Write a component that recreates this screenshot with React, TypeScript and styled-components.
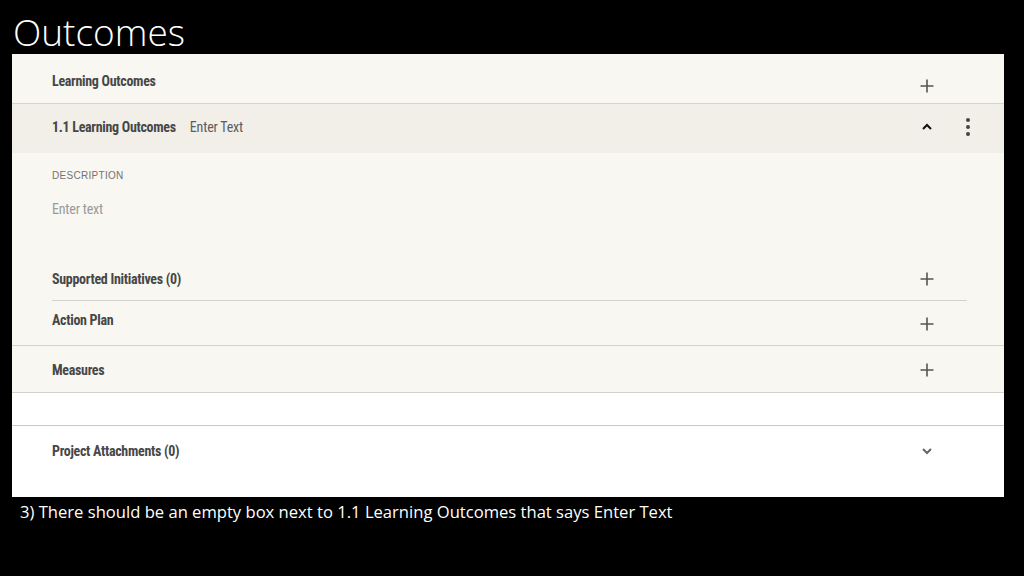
import React from "react";
import styled, { createGlobalStyle } from "styled-components";

const GlobalStyle = createGlobalStyle`
  html, body {
    margin: 0;
    padding: 0;
    background: #000;
  }
`;

const Self = styled.div`
  width: 1024px;
  height: 576px;
  background: #000;
  display: flex;
  flex-direction: column;
  overflow: hidden;
`;

const Title = styled.h1`
  margin: 0;
  height: 54px;
  padding-left: 13px;
  font-family: "Open Sans", "Liberation Sans", sans-serif;
  font-weight: 300;
  font-size: 37px;
  line-height: 1;
  color: #fff;
  display: flex;
  align-items: flex-end;
  box-sizing: border-box;
  & > span {
    transform: translateY(-4px);
  }
`;

const Panel = styled.div`
  margin-left: 12px;
  width: 992px;
  height: 443px;
  background: #f8f7f2;
  display: flex;
  flex-direction: column;
  font-family: "Liberation Sans Narrow", "Roboto Condensed", Roboto, sans-serif;
  color: #474747;
`;

const Row = styled.div<{ h: number; bg?: string; line?: string }>`
  display: flex;
  align-items: flex-start;
  height: ${p => p.h}px;
  background: ${p => p.bg || "transparent"};
  border-bottom: ${p => (p.line ? `1px solid ${p.line}` : "none")};
  padding-left: 40px;
  box-sizing: border-box;
  flex-shrink: 0;
`;

const Label = styled.span<{ top: number }>`
  margin-top: ${p => p.top}px;
  font-size: 14px;
  font-weight: 700;
  line-height: 18px;
  letter-spacing: -0.3px;
  white-space: nowrap;
`;

const Placeholder = styled.span<{ top: number }>`
  margin-top: ${p => p.top}px;
  margin-left: 14px;
  font-size: 14px;
  line-height: 18px;
  letter-spacing: -0.2px;
  color: #5d5d5d;
`;

const Icons = styled.div<{ top: number; right?: number }>`
  margin-left: auto;
  margin-top: ${p => p.top}px;
  margin-right: ${p => p.right ?? 67}px;
  display: flex;
  align-items: center;
  gap: 21px;
`;

const IconBox = styled.span`
  width: 20px;
  height: 20px;
  display: flex;
  align-items: center;
  justify-content: center;
`;

const Description = styled.div`
  height: 102px;
  padding-left: 40px;
  display: flex;
  flex-direction: column;
  box-sizing: border-box;
  flex-shrink: 0;
`;

const Caps = styled.div`
  margin-top: 17px;
  font-family: "Liberation Sans", Roboto, sans-serif;
  font-size: 10px;
  line-height: 12px;
  letter-spacing: 0.3px;
  color: #727272;
`;

const EnterText = styled.div`
  margin-top: 18px;
  font-size: 14px;
  line-height: 18px;
  letter-spacing: -0.2px;
  color: #9a9a9a;
`;

const Inset = styled.div`
  margin: 0 37px 0 40px;
  height: 46px;
  border-bottom: 1px solid #d3d1cb;
  display: flex;
  align-items: flex-start;
  box-sizing: border-box;
  flex-shrink: 0;
`;

const Spacer = styled.div`
  height: 32px;
  background: #fff;
  border-bottom: 1px solid #c8c8c8;
  flex-shrink: 0;
`;

const WhiteArea = styled.div`
  flex: 1;
  background: #fff;
  display: flex;
  align-items: flex-start;
  padding-left: 40px;
`;

const Caption = styled.p`
  margin: 5px 0 0 20px;
  font-family: "Open Sans", "Liberation Sans", sans-serif;
  font-size: 16.6px;
  line-height: 20px;
  color: #fff;
`;

const Plus = () => (
  <IconBox>
    <svg width="16" height="16" viewBox="0 0 16 16">
      <path d="M8 1.5v13M1.5 8h13" stroke="#555" strokeWidth="1.6" fill="none" />
    </svg>
  </IconBox>
);

const Chevron = ({ up, color }: { up?: boolean; color: string }) => (
  <IconBox>
    <svg width="12" height="12" viewBox="0 0 12 12">
      <path
        d={up ? "M2 8l4-4 4 4" : "M2 4l4 4 4-4"}
        stroke={color}
        strokeWidth="2"
        fill="none"
      />
    </svg>
  </IconBox>
);

const Kebab = () => (
  <IconBox>
    <svg width="6" height="20" viewBox="0 0 6 20">
      <circle cx="3" cy="3" r="2" fill="#444" />
      <circle cx="3" cy="10" r="2" fill="#444" />
      <circle cx="3" cy="17" r="2" fill="#444" />
    </svg>
  </IconBox>
);

const App: React.FC = () => (
  <Self>
    <GlobalStyle />
    <Title>
      <span>Outcomes</span>
    </Title>
    <Panel>
      <Row h={50} line="#d6d4cd">
        <Label top={18}>Learning Outcomes</Label>
        <Icons top={22}>
          <Plus />
        </Icons>
      </Row>
      <Row h={49} bg="#f1efe8">
        <Label top={14}>1.1 Learning Outcomes</Label>
        <Placeholder top={14}>Enter Text</Placeholder>
        <Icons top={13} right={26}>
          <Chevron up color="#111" />
          <Kebab />
        </Icons>
      </Row>
      <Description>
        <Caps>DESCRIPTION</Caps>
        <EnterText>Enter text</EnterText>
      </Description>
      <Inset>
        <Label top={15}>Supported Initiatives (0)</Label>
        <Icons top={14} right={30}>
          <Plus />
        </Icons>
      </Inset>
      <Row h={45} line="#d3d1cb">
        <Label top={10}>Action Plan</Label>
        <Icons top={13}>
          <Plus />
        </Icons>
      </Row>
      <Row h={47} line="#d3d1cb">
        <Label top={15}>Measures</Label>
        <Icons top={14}>
          <Plus />
        </Icons>
      </Row>
      <Spacer />
      <WhiteArea>
        <Label top={16}>Project Attachments (0)</Label>
        <Icons top={15}>
          <Chevron color="#666" />
        </Icons>
      </WhiteArea>
    </Panel>
    <Caption>3) There should be an empty box next to 1.1 Learning Outcomes that says Enter Text</Caption>
  </Self>
);

export default App;
